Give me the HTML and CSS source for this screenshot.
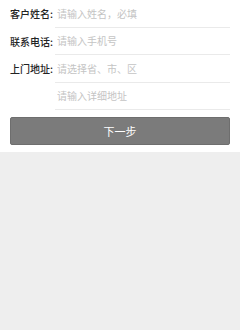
FILE: index.html
```html
<!DOCTYPE html>
<html>
  <head>
    <meta charset="utf-8" />
    <link rel="stylesheet" href="styles.css">
  </head>
  <body>
    <div class="form">
      <div class="row">
        <label>客户姓名:</label>
        <input type="text" placeholder="请输入姓名，必填" />
      </div>
      <div class="row">
        <label>联系电话:</label>
        <input type="text" placeholder="请输入手机号" />
      </div>
      <div class="row">
        <label>上门地址:</label>
        <input type="text" placeholder="请选择省、市、区" />
      </div>
      <div class="row">
        <label></label>
        <input type="text" placeholder="请输入详细地址" />
      </div>
      <div class="actions">
        <button class="next">下一步</button>
      </div>
    </div>
  </body>
</html>
```

FILE: styles.css
```css
body {
  margin: 0;
  background: #eeeeee;
  font-family: "Noto Sans CJK SC", sans-serif;
}
.form {
  background: #fff;
  padding: 0 10px 7px 10px;
}
.row {
  display: flex;
  align-items: center;
  height: 27.5px;
}
.row label {
  width: 45px;
  flex-shrink: 0;
  white-space: nowrap;
  font-size: 10px;
  color: #222;
  font-weight: 500;
}
.row input {
  flex: 1;
  min-width: 0;
  height: 100%;
  box-sizing: border-box;
  border: none;
  border-bottom: 1px solid #eaeaea;
  outline: none;
  padding: 0 0 0 2px;
  font-family: inherit;
  font-size: 10px;
  color: #333;
  background: transparent;
}
.row input::placeholder {
  color: #c4c4c4;
}
.actions {
  padding-top: 7px;
}
.next {
  display: block;
  width: 100%;
  height: 28px;
  border: 1px solid #6e6e6e;
  border-radius: 2px;
  background: #7b7b7b;
  color: #fff;
  font-family: inherit;
  font-size: 11px;
}
```
